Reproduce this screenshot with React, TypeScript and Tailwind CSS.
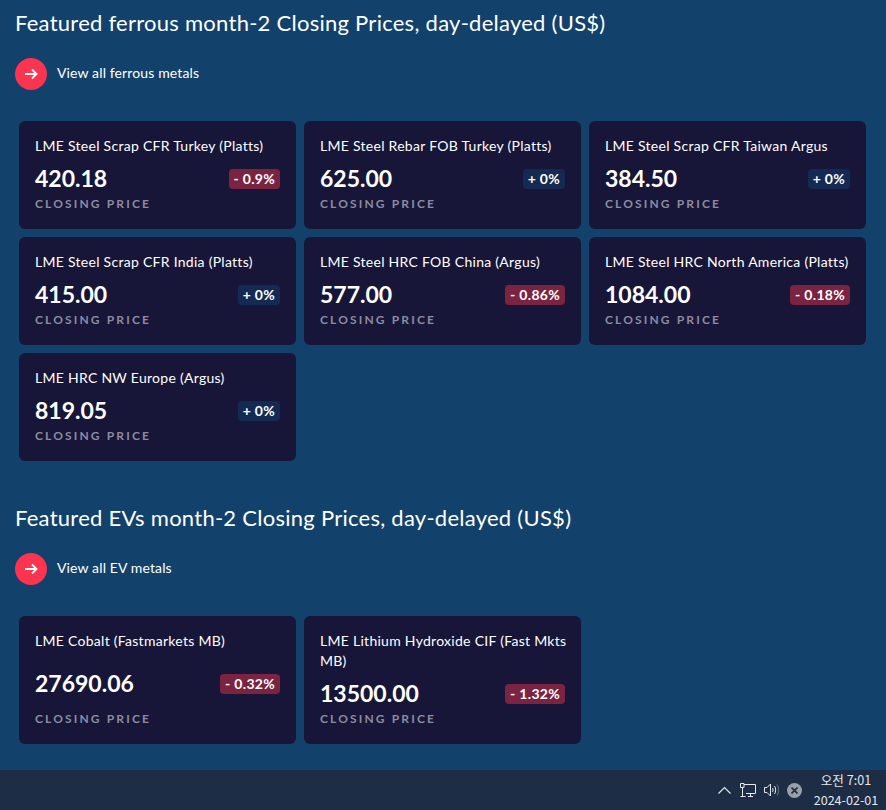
type Metal = { name: string; price: string; change: string };

const ferrous: Metal[] = [
  { name: "LME Steel Scrap CFR Turkey (Platts)", price: "420.18", change: "- 0.9%" },
  { name: "LME Steel Rebar FOB Turkey (Platts)", price: "625.00", change: "+ 0%" },
  { name: "LME Steel Scrap CFR Taiwan Argus", price: "384.50", change: "+ 0%" },
  { name: "LME Steel Scrap CFR India (Platts)", price: "415.00", change: "+ 0%" },
  { name: "LME Steel HRC FOB China (Argus)", price: "577.00", change: "- 0.86%" },
  { name: "LME Steel HRC North America (Platts)", price: "1084.00", change: "- 0.18%" },
  { name: "LME HRC NW Europe (Argus)", price: "819.05", change: "+ 0%" },
];

const evs: Metal[] = [
  { name: "LME Cobalt (Fastmarkets MB)", price: "27690.06", change: "- 0.32%" },
  { name: "LME Lithium Hydroxide CIF (Fast Mkts MB)", price: "13500.00", change: "- 1.32%" },
];

function PriceCard({ name, price, change }: Metal) {
  const down = change.startsWith("-");
  return (
    <div className="flex flex-col justify-between rounded-md bg-[#171639] px-4 pt-[15px] pb-4">
      <p className="-mr-2 mb-1.5 text-sm leading-5 tracking-[0.28px] text-white">{name}</p>
      <div className="mb-[3px] flex items-center justify-between">
        <span className="text-[23px] leading-8 font-bold text-white">{price}</span>
        <span
          className={`mt-0.5 rounded px-[5px] text-sm leading-5 font-bold tracking-[0.3px] text-white ${
            down ? "bg-[#7a2441]" : "bg-[#152a52]"
          }`}
        >
          {change}
        </span>
      </div>
      <span className="-mt-px mb-px text-xs leading-4 font-bold tracking-[2.15px] text-[#8c8ca0]">CLOSING PRICE</span>
    </div>
  );
}

function Section({ title, link, items }: { title: string; link: string; items: Metal[] }) {
  return (
    <section className="flex flex-col">
      <h2 className="pl-[15px] text-[22px] leading-8 tracking-[0.26px] text-white">{title}</h2>
      <div className="mt-[19px] flex items-center gap-2.5 pl-[15px]">
        <div className="flex size-8 items-center justify-center rounded-full bg-[#fb344f]">
          <svg width="14" height="12" viewBox="0 0 14 12" fill="none" stroke="white" strokeWidth="1.8">
            <path d="M1 6h11.5M8 1.5 12.5 6 8 10.5" />
          </svg>
        </div>
        <span className="-mt-0.5 text-sm tracking-[0.13px] text-white">{link}</span>
      </div>
      <div className="mt-[31px] grid grid-cols-[277px_277px_277px] gap-2 pl-[19px]">
        {items.map((m) => (
          <PriceCard key={m.name} {...m} />
        ))}
      </div>
    </section>
  );
}

function Taskbar() {
  return (
    <div className="flex h-10 items-center justify-end bg-[#1c2d45] pr-[3px] font-['Noto_Sans_CJK_KR','Liberation_Sans',sans-serif] text-[#e4e7ec]">
      <svg width="13" height="8" viewBox="0 0 13 8" fill="none" stroke="currentColor" strokeWidth="1.2">
        <path d="M.5 7.5 6.5 1.5l6 6" />
      </svg>
      <svg className="ml-[9px]" width="16" height="14" viewBox="0 0 16 14" fill="none" stroke="currentColor">
        <path d="M4 1.5h11.5v9H6M.5.5h3.5v4H.5zM2.5 4.5v8.5M.5 13.5h5M8 13.5h5M10.5 10.5v3" />
      </svg>
      <svg className="ml-2" width="15" height="14" viewBox="0 0 15 14" fill="none" stroke="currentColor">
        <path d="M.5 4.5h2.5L6.5 1v12L3 9.5H.5z" />
        <path d="M8.5 5c.8 1.2.8 2.8 0 4M10.5 3c1.6 2.4 1.6 5.6 0 8" />
        <path d="M13 1.5c2.2 3.4 2.2 7.6 0 11" opacity="0.4" />
      </svg>
      <div className="ml-2 flex size-[15px] items-center justify-center rounded-full bg-[#9aa0aa] text-[#1c2d45]">
        <svg width="7" height="7" viewBox="0 0 7 7" stroke="currentColor" strokeWidth="1.6">
          <path d="m.5.5 6 6M6.5.5l-6 6" />
        </svg>
      </div>
      <div className="ml-[7px] flex w-[74px] flex-col items-center text-[12.6px] leading-5">
        <span>오전 7:01</span>
        <span>2024-02-01</span>
      </div>
    </div>
  );
}

export default function App() {
  return (
    <div className="flex h-[810px] w-[886px] flex-col overflow-hidden bg-[#12426b] font-['Lato','Noto_Sans',sans-serif]">
      <main className="flex flex-1 flex-col gap-[41px] pt-[7px]">
        <Section title="Featured ferrous month-2 Closing Prices, day-delayed (US$)" link="View all ferrous metals" items={ferrous} />
        <Section title="Featured EVs month-2 Closing Prices, day-delayed (US$)" link="View all EV metals" items={evs} />
      </main>
      <Taskbar />
    </div>
  );
}
